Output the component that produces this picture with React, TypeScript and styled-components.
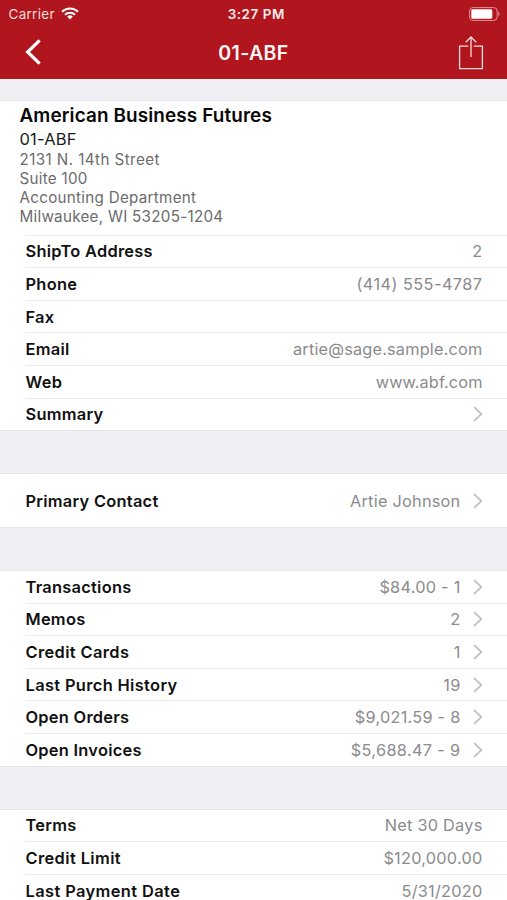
import React from "react";
import styled, { createGlobalStyle } from "styled-components";

const GlobalStyle = createGlobalStyle`
  * { box-sizing: border-box; }
  html, body { margin: 0; height: 900px; overflow: hidden; background: #efeff4; }
  body { font-family: Inter, "Liberation Sans", sans-serif; color: #111; }
`;

const Screen = styled.main`
  width: 507px;
  height: 900px;
  overflow: hidden;
  background: #efeff4;
`;

const Header = styled.header`
  height: 79px;
  background: #b1161e;
  color: #fff;
`;

const StatusBar = styled.div`
  height: 27px;
  padding: 0 7px 0 8.5px;
  display: grid;
  grid-template-columns: 1fr auto 1fr;
  align-items: center;
  font-size: 13.4px;
  letter-spacing: 0.35px;
`;

const Carrier = styled.div`
  display: flex;
  align-items: center;
  gap: 6px;
  color: #f8dedf;
`;

const Clock = styled.time`
  font-weight: 600;
  color: #fdeeee;
  letter-spacing: 0.55px;
  padding-left: 4px;
`;

const BatteryIcon = styled.svg`
  justify-self: end;
`;

const NavBar = styled.nav`
  height: 51px;
  display: grid;
  grid-template-columns: 1fr auto 1fr;
  align-items: center;
`;

const NavButton = styled.button<{ $end?: boolean }>`
  display: flex;
  width: 50px;
  height: 44px;
  padding: 0;
  border: 0;
  background: none;
  color: inherit;
  justify-self: ${(p) => (p.$end ? "end" : "start")};
`;

const Title = styled.h1`
  margin: 0;
  font-size: 19.6px;
  font-weight: 600;
  letter-spacing: 0.35px;
  color: #fff5f5;
`;

const Section = styled.section<{ $gap: number }>`
  margin-top: ${(p) => p.$gap}px;
  background: #fff;
  box-shadow: 0 -1px 0 #e6e6ea, 0 1px 0 #e6e6ea;
`;

const Company = styled.div`
  height: 133.7px;
  padding: 3px 0 0 19.5px;
`;

const CompanyName = styled.h2`
  margin: 0;
  font-size: 18.9px;
  line-height: 23.5px;
  font-weight: 600;
  letter-spacing: 0.12px;
  color: #080808;
`;

const CompanyCode = styled.div`
  font-size: 16.5px;
  line-height: 22.5px;
  letter-spacing: 0.2px;
  color: #1b1b1b;
`;

const Address = styled.address`
  font-style: normal;
  font-size: 15.2px;
  line-height: 18.9px;
  padding-top: 1px;
  letter-spacing: 0.3px;
  color: #6b6b6b;
`;

const AddressLine = styled.div<{ $tracking?: number }>`
  letter-spacing: ${(p) => p.$tracking ?? 0.28}px;
`;

const Row = styled.div<{ $height: number; $line?: boolean }>`
  height: ${(p) => p.$height}px;
  margin-left: 25.5px;
  padding-right: 24.5px;
  display: flex;
  align-items: center;
  border-top: ${(p) => (p.$line ? "1px solid #e9e9eb" : "0")};
  font-size: 16.4px;
  line-height: 18px;
`;

const Label = styled.span<{ $tracking?: number }>`
  flex: 1;
  font-weight: 600;
  letter-spacing: ${(p) => p.$tracking ?? 0.27}px;
`;

const Value = styled.span<{ $tracking?: number }>`
  color: #8b8b8e;
  font-size: 16.3px;
  letter-spacing: ${(p) => p.$tracking ?? 0.25}px;
`;

const Chevron = styled.svg`
  margin-left: 12px;
  flex: none;
`;

type Entry = {
  label: string;
  value?: string;
  link?: boolean;
  labelTracking?: number;
  valueTracking?: number;
};

const contactRows: Entry[] = [
  { label: "ShipTo Address", value: "2" },
  { label: "Phone", value: "(414) 555-4787", valueTracking: 0.45 },
  { label: "Fax" },
  { label: "Email", value: "artie@sage.sample.com", valueTracking: 0.2 },
  { label: "Web", value: "www.abf.com", valueTracking: 0.1 },
  { label: "Summary", link: true },
];

const activityRows: Entry[] = [
  { label: "Transactions", value: "$84.00 - 1", link: true },
  { label: "Memos", value: "2", link: true },
  { label: "Credit Cards", value: "1", link: true, labelTracking: 0.38 },
  { label: "Last Purch History", value: "19", link: true, labelTracking: 0.36 },
  { label: "Open Orders", value: "$9,021.59 - 8", link: true },
  { label: "Open Invoices", value: "$5,688.47 - 9", link: true, valueTracking: 0.35 },
];

const termRows: Entry[] = [
  { label: "Terms", value: "Net 30 Days" },
  { label: "Credit Limit", value: "$120,000.00", labelTracking: 0.4 },
  { label: "Last Payment Date", value: "5/31/2020", labelTracking: 0.41 },
];

function ListRow({ entry, line, height }: { entry: Entry; line?: boolean; height?: number }) {
  return (
    <Row $line={line} $height={height ?? (line ? 32.6 : 31.8)}>
      <Label $tracking={entry.labelTracking}>{entry.label}</Label>
      {entry.value && <Value $tracking={entry.valueTracking}>{entry.value}</Value>}
      {entry.link && (
        <Chevron width="10" height="16" viewBox="0 0 10 16" fill="none" stroke="#c3c3c7" strokeWidth="1.8">
          <path d="M1 1 8.4 8 1 15" />
        </Chevron>
      )}
    </Row>
  );
}

export default function App() {
  return (
    <Screen>
      <GlobalStyle />
      <Header>
        <StatusBar>
          <Carrier>
            Carrier
            <svg width="18" height="13" viewBox="0 0 18 13" fill="none" stroke="#fff" strokeWidth="2">
              <path d="M1 4.7a11.4 11.4 0 0 1 16 0M4 7.8a7.1 7.1 0 0 1 10 0" />
              <path d="M9 12.4 6.2 9.6a4 4 0 0 1 5.6 0z" fill="#fff" stroke="none" />
            </svg>
          </Carrier>
          <Clock>3:27 PM</Clock>
          <BatteryIcon width="31" height="14" viewBox="0 0 31 14" fill="none">
            <rect x="0.6" y="0.6" width="27.6" height="12.8" rx="3.4" stroke="#df9297" strokeWidth="1" />
            <rect x="2.3" y="2.3" width="21" height="9.4" rx="1.4" fill="#fff" />
            <path d="M29.4 4.8c1.6.6 1.6 3.8 0 4.4z" fill="#df9297" />
          </BatteryIcon>
        </StatusBar>
        <NavBar>
          <NavButton aria-label="Back">
            <svg width="50" height="44" viewBox="0 0 50 44" fill="none" stroke="#fff" strokeWidth="3.2">
              <path d="M39.6 9.3 27.6 21l12 11.7" />
            </svg>
          </NavButton>
          <Title>01-ABF</Title>
          <NavButton $end aria-label="Share">
            <svg width="50" height="44" viewBox="0 0 50 44" fill="none" stroke="#f9dcdd" strokeWidth="1.3">
              <path d="M11.3 15.2H2.6v22.4h22.8V15.2h-8.7M14 26V6.2M8.8 11.2 14 6l5.2 5.2" />
            </svg>
          </NavButton>
        </NavBar>
      </Header>
      <Section $gap={22}>
        <Company>
          <CompanyName>American Business Futures</CompanyName>
          <CompanyCode>01-ABF</CompanyCode>
          <Address>
            <AddressLine $tracking={0.42}>2131 N. 14th Street</AddressLine>
            <AddressLine>Suite 100</AddressLine>
            <AddressLine>Accounting Department</AddressLine>
            <AddressLine>Milwaukee, WI 53205-1204</AddressLine>
          </Address>
        </Company>
        {contactRows.map((entry) => (
          <ListRow key={entry.label} entry={entry} line />
        ))}
      </Section>
      <Section $gap={44}>
        <ListRow entry={{ label: "Primary Contact", value: "Artie Johnson", link: true }} height={52.5} />
      </Section>
      <Section $gap={44}>
        {activityRows.map((entry, i) => (
          <ListRow key={entry.label} entry={entry} line={i > 0} />
        ))}
      </Section>
      <Section $gap={44}>
        {termRows.map((entry, i) => (
          <ListRow key={entry.label} entry={entry} line={i > 0} />
        ))}
      </Section>
    </Screen>
  );
}
